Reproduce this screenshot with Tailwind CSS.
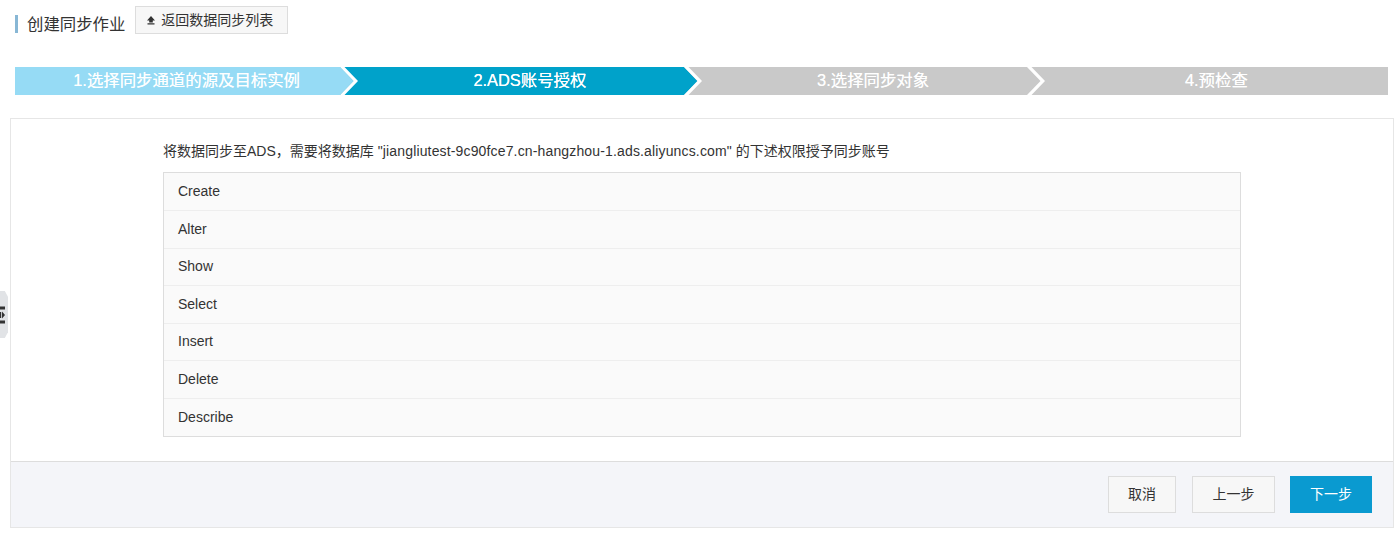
<!DOCTYPE html>
<html lang="zh">
<head>
    <meta charset="utf-8"/>
    <title>创建同步作业</title>
    <script src="https://cdn.jsdelivr.net/npm/@tailwindcss/browser@4"></script>
</head>
<body class="bg-white font-['Liberation_Sans','Noto_Sans_CJK_SC',sans-serif] text-[#333] overflow-hidden">
    <div class="relative h-[538px] w-[1400px]">
        <!-- sidebar handle -->
        <div class="absolute left-0 top-[291px] flex h-[47px] w-[8px] items-center bg-[#e1e3e6] [clip-path:polygon(0_0,60%_0,100%_12%,100%_88%,60%_100%,0_100%)]">
            <svg width="6" height="18" viewBox="0 0 6 18" fill="#333"><rect y="0.500" width="5" height="3"/><rect y="14.500" width="5" height="3"/><path d="M0 6h1.200v6H0zM2 5.500l3 3.500-3 3.500z"/></svg>
        </div>

        <!-- header -->
        <div class="flex h-[67px] items-start pl-[15px] pt-[6px]">
            <div class="mt-[9px] h-[18px] w-[3px] bg-[#88b7d5]"></div>
            <h1 class="ml-[9px] mt-[7px] text-[16.400px] leading-[22px] font-normal text-[#333]">创建同步作业</h1>
            <button class="ml-[10px] flex h-[28px] w-[153px] items-center border border-[#ddd] bg-[#f7f7f7] pl-[10px] text-[14px] text-[#333]">
                <svg width="10" height="10" viewBox="0 0 10 10" fill="#333"><path d="M5 1 9 5.500H6.800V7.500H3.200V5.500H1zM1.500 8.200h7v1.300h-7z"/></svg>
                <span class="ml-[5px]">返回数据同步列表</span>
            </button>
        </div>

        <!-- steps -->
        <div class="ml-[15px] flex h-[28px] w-[1373px] text-[16.400px] leading-[26px] text-white/85 [text-shadow:0_0_0.6px_#fff]">
            <div class="relative flex flex-1 items-start justify-center bg-[#96dbf5]">
                <span>1.选择同步通道的源及目标实例</span>
                <svg class="absolute right-0 top-0" width="20" height="28" viewBox="0 0 20 28"><rect width="20" height="28" fill="#00a2ca"/><path d="M0 0H2L15.500 14 2 28H0z" fill="#96dbf5"/><path d="M2 0H6.500L20 14 6.500 28H2L15.500 14z" fill="#fff"/></svg>
            </div>
            <div class="relative flex flex-1 items-start justify-center bg-[#00a2ca]">
                <span class="text-white">2.ADS账号授权</span>
                <svg class="absolute right-0 top-0" width="20" height="28" viewBox="0 0 20 28"><rect width="20" height="28" fill="#c9c9c9"/><path d="M0 0H2L15.500 14 2 28H0z" fill="#00a2ca"/><path d="M2 0H6.500L20 14 6.500 28H2L15.500 14z" fill="#fff"/></svg>
            </div>
            <div class="relative flex flex-1 items-start justify-center bg-[#c9c9c9]">
                <span>3.选择同步对象</span>
                <svg class="absolute right-0 top-0" width="20" height="28" viewBox="0 0 20 28"><path d="M2 0H6.500L20 14 6.500 28H2L15.500 14z" fill="#fff"/></svg>
            </div>
            <div class="flex flex-1 items-start justify-center bg-[#c9c9c9]">
                <span>4.预检查</span>
            </div>
        </div>

        <!-- panel -->
        <div class="ml-[10px] mt-[23px] flex h-[410px] w-[1384px] flex-col border border-[#e6e6e6]">
            <div class="flex-1 pl-[152px] pt-[23px]">
                <p class="text-[14px] leading-[19px] text-[#333]">将数据同步至ADS，需要将数据库 <span class="tracking-[0.15px]">"jiangliutest-9c90fce7.cn-hangzhou-1.ads.aliyuncs.com"</span> 的下述权限授予同步账号</p>
                <ul class="mt-[11px] w-[1078px] border border-[#ddd] bg-[#fafafa] pt-[0.500px] text-[14px] text-[#333]">
                    <li class="flex h-[37.500px] items-center border-b border-[#eee] pl-[14px]">Create</li>
                    <li class="flex h-[37.500px] items-center border-b border-[#eee] pl-[14px]">Alter</li>
                    <li class="flex h-[37.500px] items-center border-b border-[#eee] pl-[14px]">Show</li>
                    <li class="flex h-[37.500px] items-center border-b border-[#eee] pl-[14px]">Select</li>
                    <li class="flex h-[37.500px] items-center border-b border-[#eee] pl-[14px]">Insert</li>
                    <li class="flex h-[37.500px] items-center border-b border-[#eee] pl-[14px]">Delete</li>
                    <li class="flex h-[37.500px] items-center pl-[14px]">Describe</li>
                </ul>
            </div>
            <div class="flex h-[66px] items-center justify-end border-t border-[#ddd] bg-[#f4f5f9] pr-[21px]">
                <button class="h-[37px] w-[68px] border border-[#ddd] bg-[#f7f7f7] text-[14px] text-[#333]">取消</button>
                <button class="ml-[16px] h-[37px] w-[83px] border border-[#ddd] bg-[#f7f7f7] text-[14px] text-[#333]">上一步</button>
                <button class="ml-[15px] h-[37px] w-[82px] bg-[#0a9ad0] text-[14px] text-white">下一步</button>
            </div>
        </div>
    </div>
</body>
</html>
